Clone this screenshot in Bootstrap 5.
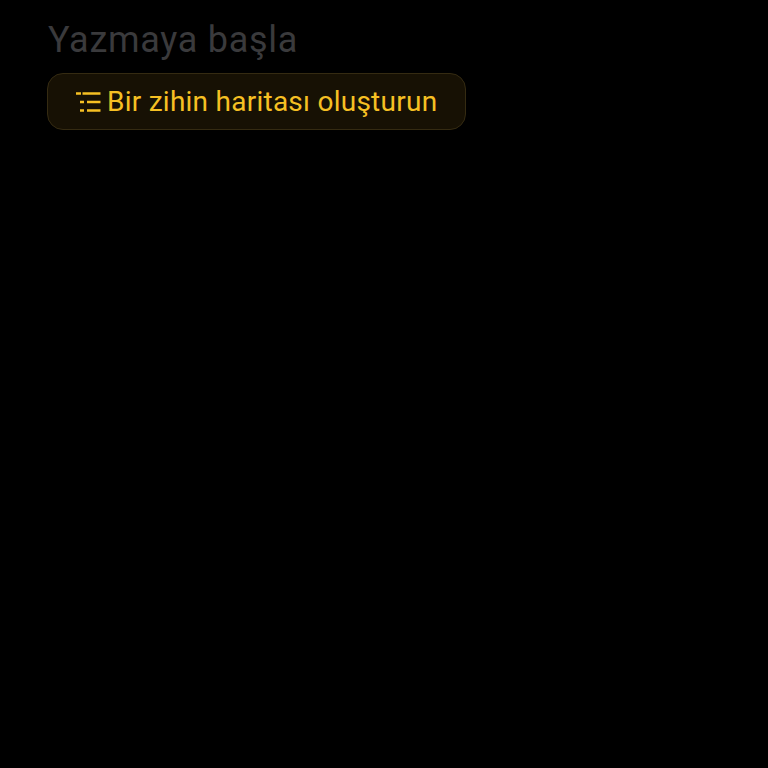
<!DOCTYPE html>
<html lang="tr">
<head>
<meta charset="utf-8">
<title>Yazmaya başla</title>
<link href="https://cdn.jsdelivr.net/npm/bootstrap@5.3.0/dist/css/bootstrap.min.css" rel="stylesheet">
<style>
html, body { background: #000; height: 100%; }
body { font-family: Roboto, "Noto Sans", sans-serif; }
.editor-wrap { padding: 17px 47px 0; }
.start-title { color: #3a3a3c; font-size: 36px; line-height: 46px; font-weight: 400; letter-spacing: .73px; margin: 0 0 10px; padding-left: 1px; }
.mind-btn { background: #171104; border: 1px solid #352b12; border-radius: 16px; color: #f6c023; height: 57px; padding: 0 28px; font-size: 28px; letter-spacing: .25px; line-height: 1; gap: 6px; }
.mind-btn:hover { background: #171104; border-color: #352b12; color: #f6c023; }
.mind-ico { width: 25px; height: 22px; flex: none; }
</style>
</head>
<body>
<main class="editor-wrap">
  <h1 class="start-title">Yazmaya başla</h1>
  <button type="button" class="btn mind-btn d-inline-flex align-items-center">
    <svg class="mind-ico" viewBox="0 0 25 22" fill="none" stroke="currentColor" stroke-width="2.6" aria-hidden="true">
      <path d="M0 2.5h5M6.5 2.5h18M4 11h4M11 11h13.500M4 19.500h4M11 19.500h13.500"/>
    </svg>
    <span>Bir zihin haritası oluşturun</span>
  </button>
</main>
<script src="https://cdn.jsdelivr.net/npm/bootstrap@5.3.0/dist/js/bootstrap.bundle.min.js"></script>
</body>
</html>
